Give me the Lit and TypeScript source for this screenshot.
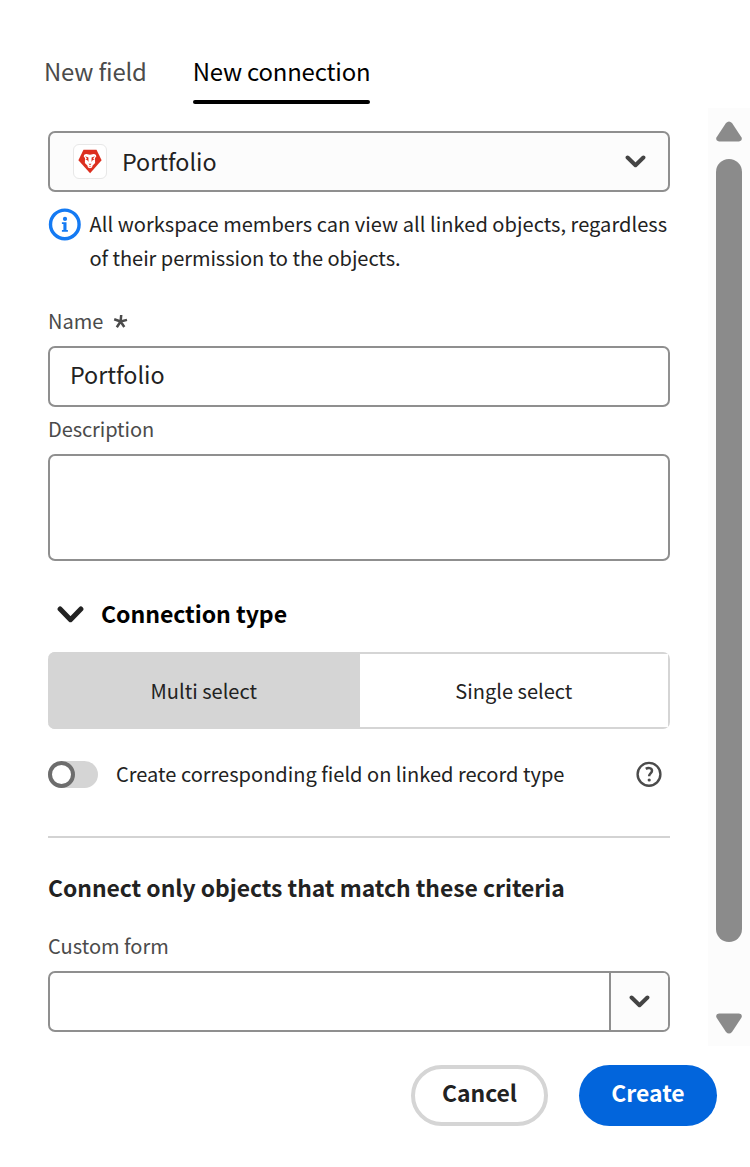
import { LitElement, html, css, svg } from "lit";
import { customElement, state } from "lit/decorators.js";
import { classMap } from "lit/directives/class-map.js";

const chevron = (width: number, height: number, stroke: number) => svg`
  <svg class="chevron" width=${width} height=${height} viewBox="0 0 ${width} ${height}" fill="none">
    <path
      d="M${stroke / 2 + 0.6} ${stroke / 2 + 0.5}L${width / 2} ${height - stroke / 2 - 0.8}L${width - stroke / 2 - 0.6} ${stroke / 2 + 0.5}"
      stroke="currentColor" stroke-width=${stroke} stroke-linecap="round" stroke-linejoin="round" />
  </svg>`;

@customElement("app-root")
export class AppRoot extends LitElement {
  static styles = css`
    * { box-sizing: border-box; }
    :host {
      display: flex;
      flex-direction: column;
      width: 750px;
      height: 1167px;
      overflow: hidden;
      background: #fff;
      color: #222;
      font-family: "Noto Sans CJK JP", "Noto Sans", sans-serif;
      font-size: 20.05px;
      line-height: 34px;
      white-space: nowrap;
    }
    svg { display: block; flex: none; }
    .tabs {
      display: flex;
      gap: 46px;
      height: 108px;
      padding: 51px 0 0 44px;
      font-size: 23.9px;
      letter-spacing: -0.18px;
      line-height: 39px;
      flex: none;
    }
    .tab { height: 53px; color: #4b4b4b; }
    .tab.active { color: #000; }
    .tab.active::after {
      content: "";
      display: block;
      height: 4px;
      margin-top: 10px;
      border-radius: 2px;
      background: #000;
    }
    .body { display: flex; height: 938px; flex: none; }
    .form { width: 669.7px; padding: 23px 0 0 48px; flex: none; }
    .field {
      display: flex;
      align-items: center;
      height: 61px;
      border: 2px solid #8f8f8f;
      border-radius: 7px;
      color: #222;
      font-size: 23.3px;
      background: #fff;
    }
    .picker { padding: 0 22px 0 23px; background: #fcfcfc; color: #222; }
    .picker .value { flex: 1; padding: 0 0 1px 15px; }
    .chevron { color: #444; }
    .badge {
      display: grid;
      place-items: center;
      width: 34px;
      height: 35px;
      border: 1.5px solid #e8e8e8;
      border-radius: 6px;
      background: #fff;
    }
    .note { display: flex; gap: 8.5px; margin-top: 15px; }
    .note svg { margin-top: 1px; }
    .line { display: block; letter-spacing: 0.04px; }
    .line + .line { letter-spacing: -0.05px; }
    .label { color: #4b4b4b; }
    .name-label { display: flex; align-items: center; gap: 10px; margin: 24px 0 3px; height: 44px; }
    .name { padding: 0 20px 5px; }
    .description-label { height: 47px; line-height: 44px; letter-spacing: -0.1px; }
    .area { height: 107px; }
    .section {
      display: flex;
      align-items: center;
      gap: 17px;
      height: 53px;
      margin-top: 28px;
      padding-left: 9px;
      font-size: 23.1px;
      font-weight: 700;
      color: #000;
    }
    .section .chevron { color: #222; margin-bottom: 2px; }
    .section span { padding-bottom: 5px; letter-spacing: -0.07px; }
    .segments {
      display: grid;
      grid-template-columns: 311.5px 1fr;
      height: 77px;
      margin-top: 10px;
      border: 2px solid #d5d5d5;
      border-left: 0;
      border-radius: 7px;
    }
    .segment { display: grid; place-items: center; margin-right: -0.5px; background: #fff; }
    .segment.selected { margin: -2px 0; background: #d5d5d5; border-radius: 7px 0 0 7px; }
    .toggle-row { display: flex; align-items: center; height: 34px; margin-top: 28px; }
    .switch { width: 50px; height: 27px; border-radius: 14px; background: #d5d5d5; }
    .knob { width: 27px; height: 27px; border: 4px solid #6d6d6d; border-radius: 50%; background: #fff; }
    .toggle-label { flex: 1; padding-left: 18px; }
    .help { margin-right: 8px; }
    .divider { height: 2px; margin-top: 45px; background: #d3d3d3; }
    .criteria { margin-top: 32px; font-size: 22.9px; font-weight: 700; line-height: 34px; letter-spacing: -0.03px; }
    .custom-label { height: 48px; margin-top: 19px; line-height: 45px; }
    .combo .input { flex: 1; }
    .combo .open {
      display: grid;
      place-items: center;
      width: 59px;
      height: 57px;
      border-left: 2px solid #8f8f8f;
      border-radius: 0 5px 5px 0;
      background: #fcfcfc;
    }
    .scrollbar {
      display: flex;
      flex-direction: column;
      align-items: center;
      width: 42px;
      margin-left: 38.3px;
      padding: 13px 0 0;
      background: #fcfcfc;
    }
    .thumb { width: 26px; height: 783px; margin: 17px 0 71px; border-radius: 13px; background: #8b8b8b; }
    .actions { display: flex; justify-content: flex-end; gap: 31px; padding: 19px 33px 0 0; }
    .button {
      width: 138px;
      height: 61px;
      border: 0;
      padding: 0 0 7px;
      border-radius: 31px;
      font: 700 22.9px "Noto Sans CJK JP", "Noto Sans", sans-serif;
      line-height: 34px;
      color: #fff;
      background: #0265dc;
    }
    .button.secondary { border: 4px solid #d5d5d5; width: 137px; background: #fff; color: #222; }
  `;

  @state() private selected = "Multi select";

  private lion() {
    return svg`
      <svg width="24" height="25" viewBox="0 0 24 25">
        <path d="M5.5.8h13L23.6 11.3 12.1 24.3.4 11.3z" fill="#dc2f1f" />
        <path d="M6 6.1Q7.4 4.8 9.5 5.2L12 5.7l2.5-.5q2.1-.4 3.5.9l.2 2-1.2.6.1 5.2-2.5 2.6-.6 1.9-2 .8-2-.8-.6-1.9-2.5-2.6.1-5.2-1.2-.6z" fill="#fff" />
        <path d="M7 7.2l3.4 1.2.1 4.6-1.3-1.9-1.9-.7 1.7-.8zM17 7.2l-3.4 1.2-.1 4.6 1.3-1.9 1.9-.7-1.7-.8zM10.5 14.8h3L12 16.2zM10.6 17.4h2.8l-.7.7h-1.4z" fill="#dc2f1f" />
      </svg>`;
  }

  private info() {
    return svg`
      <svg width="33" height="33" viewBox="0 0 33 33">
        <circle cx="16.8" cy="16.4" r="14.3" fill="none" stroke="#147af3" stroke-width="3.4" />
        <circle cx="17" cy="10.9" r="2.1" fill="#147af3" />
        <path d="M13.9 14.3h4.6v7.6h1.4v1.8h-6v-1.8h1.5v-5.8h-1.5z" fill="#147af3" />
      </svg>`;
  }

  private help() {
    return svg`
      <svg class="help" width="26" height="26" viewBox="0 0 26 26">
        <circle cx="13" cy="13.3" r="11.4" fill="none" stroke="#4b4b4b" stroke-width="2.4" />
        <path d="M9.8 7.9C11.9 6.5 16 6.6 16 9.7c0 2.5-2.8 2.7-2.8 5.1v.5" fill="none" stroke="#4b4b4b" stroke-width="2.5" />
        <circle cx="13.2" cy="19" r="1.6" fill="#4b4b4b" />
      </svg>`;
  }

  private arrow(down: boolean) {
    return svg`
      <svg width="26" height="21" viewBox="0 0 26 21">
        <path d=${down
          ? "M3 .5h20q4 .6 2.4 4.2L16 18.9q-3 3.2-6 0L.6 4.7Q-1 1.1 3 .5z"
          : "M3 20.5h20q4-.6 2.4-4.2L16 2.1q-3-3.2-6 0L.6 16.3Q-1 19.9 3 20.5z"} fill="#8b8b8b" />
      </svg>`;
  }

  render() {
    return html`
      <div class="tabs">
        <div class="tab">New field</div>
        <div class="tab active">New connection</div>
      </div>
      <div class="body">
        <div class="form">
          <div class="field picker">
            <span class="badge">${this.lion()}</span>
            <span class="value">Portfolio</span>
            ${chevron(21, 13, 4)}
          </div>
          <div class="note">
            ${this.info()}
            <div>
              <span class="line">All workspace members can view all linked objects, regardless</span>
              <span class="line">of their permission to the objects.</span>
            </div>
          </div>
          <div class="label name-label">
            <span>Name</span>
            <svg width="15" height="15" viewBox="0 0 15 15">
              <path d="M7.6 7.5L8.2 1M7.6 7.5L1.2 5.3M7.6 7.5L14 5.9M7.6 7.5L3.8 13.2M7.6 7.5L11.3 13" stroke="#4b4b4b" stroke-width="2.5" />
            </svg>
          </div>
          <div class="field name">Portfolio</div>
          <div class="label description-label">Description</div>
          <div class="field area"></div>
          <div class="section">${chevron(27, 17, 5)}<span>Connection type</span></div>
          <div class="segments">
            ${["Multi select", "Single select"].map(
              (name) => html`<div
                class=${classMap({ segment: true, selected: this.selected === name })}
                @click=${() => (this.selected = name)}
              >${name}</div>`
            )}
          </div>
          <div class="toggle-row">
            <div class="switch"><div class="knob"></div></div>
            <div class="toggle-label">Create corresponding field on linked record type</div>
            ${this.help()}
          </div>
          <div class="divider"></div>
          <div class="criteria">Connect only objects that match these criteria</div>
          <div class="label custom-label">Custom form</div>
          <div class="field combo">
            <div class="input"></div>
            <div class="open">${chevron(21, 13, 4)}</div>
          </div>
        </div>
        <div class="scrollbar">
          ${this.arrow(false)}
          <div class="thumb"></div>
          ${this.arrow(true)}
        </div>
      </div>
      <div class="actions">
        <button class="button secondary">Cancel</button>
        <button class="button">Create</button>
      </div>
    `;
  }
}
